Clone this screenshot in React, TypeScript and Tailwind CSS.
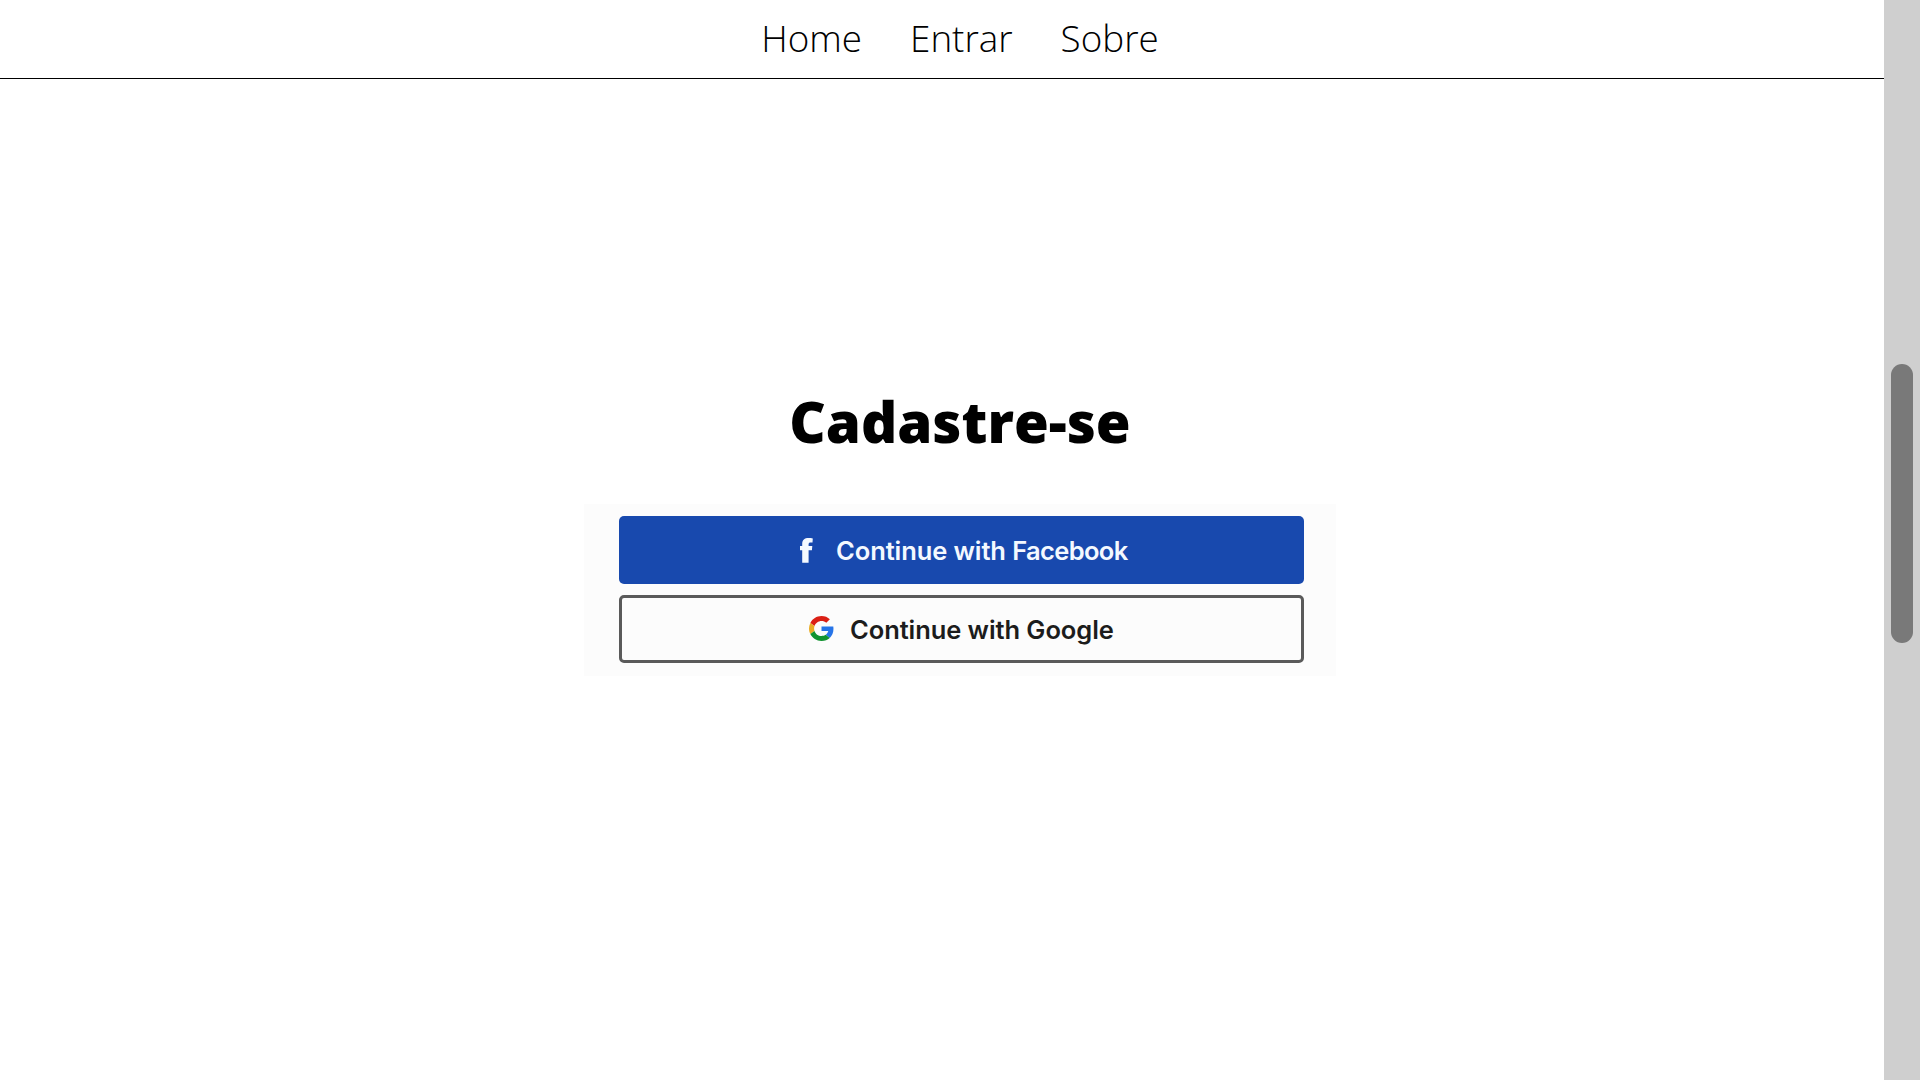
const navItems = ["Home", "Entrar", "Sobre"];

function FacebookGlyph() {
  return (
    <svg className="h-[25px] w-[13px]" viewBox="0 0 13 25" fill="#f4f9ff">
      <path d="M2.2 24.8V12.2H0V7.9h2.2V6C2.2 1.9 4.6 0 8.6 0c1.6 0 2.9.1 4.2.5l-.3 4.1c-2.9-.4-3.9-.1-3.9 1.6v1.7h3.7l-.4 4.3H8.6v12.6z" />
    </svg>
  );
}

function GoogleGlyph() {
  return (
    <svg className="mb-px h-[25px] w-[25px]" viewBox="0 0 48 48">
      <path fill="#db2015" d="M24 9.5c3.54 0 6.71 1.22 9.21 3.6l6.85-6.85C35.9 2.38 30.47 0 24 0 14.62 0 6.51 5.38 2.56 13.22l7.98 6.19C12.43 13.72 17.74 9.5 24 9.5z" />
      <path fill="#2674e8" d="M46.98 24.55c0-1.57-.15-3.09-.38-4.55H24v9.02h12.94c-.58 2.96-2.26 5.48-4.78 7.18l7.73 6c4.51-4.18 7.09-10.36 7.09-17.65z" />
      <path fill="#e9ac26" d="M10.53 28.59c-.48-1.45-.76-2.99-.76-4.59s.27-3.14.76-4.59l-7.98-6.19C.92 16.46 0 20.12 0 24c0 3.88.92 7.54 2.56 10.78l7.97-6.19z" />
      <path fill="#119330" d="M24 48c6.48 0 11.93-2.13 15.89-5.81l-7.73-6c-2.15 1.45-4.92 2.3-8.16 2.3-6.26 0-11.57-4.22-13.47-9.91l-7.98 6.19C6.51 42.62 14.62 48 24 48z" />
    </svg>
  );
}

export default function App() {
  return (
    <div className="flex h-[1080px] w-[1920px] overflow-hidden bg-white font-['Open_Sans',sans-serif] text-black">
      <div className="flex min-w-0 flex-1 flex-col">
        <header className="flex h-[79px] shrink-0 justify-center border-b border-black pl-9">
          <nav className="flex h-[77px] items-center gap-[48px] text-[36.8px] font-light">
            {navItems.map((item) => (
              <a key={item}>{item}</a>
            ))}
          </nav>
        </header>
        <main className="flex flex-col items-center pt-[305px] pl-9">
          <h1 className="h-[76px] text-[56.4px] leading-[76px] font-extrabold">Cadastre-se</h1>
          <section className="mt-[44px] flex h-[172px] w-[752px] flex-col gap-[11px] bg-[#fcfcfc] pt-3 pr-8 pl-[35px] font-[Inter,sans-serif] text-[25.5px] font-semibold">
            <button className="flex h-[68px] shrink-0 items-center rounded-[5px] bg-[#1849ae] pl-[181px] text-[#f4f9ff]">
              <FacebookGlyph />
              <span className="ml-[23px] pt-[2px] tracking-[-0.09px] whitespace-nowrap">
                Continue with <span className="tracking-[-0.65px]">Facebook</span>
              </span>
            </button>
            <button className="flex h-[68px] shrink-0 items-center rounded-[5px] border-[3px] border-[#5a5a5a] pl-[187px] text-[#1c1c1c]">
              <GoogleGlyph />
              <span className="ml-[16px] pt-[2px] tracking-[-0.08px] whitespace-nowrap">Continue with Google</span>
            </button>
          </section>
        </main>
      </div>
      <aside className="flex w-9 shrink-0 justify-center bg-[#cfcfcf] pt-[364px]">
        <div className="h-[279px] w-[22px] rounded-full bg-[#797979]" />
      </aside>
    </div>
  );
}
